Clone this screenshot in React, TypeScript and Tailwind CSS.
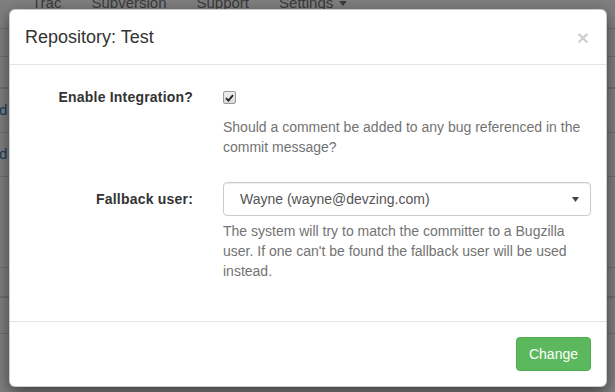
export default function App() {
  const rows = [
    { h: 'h-[28px]', b: 'border-b' },
    { h: 'h-[32px]', b: 'border-b-2' },
    { h: 'h-[44px]', b: 'border-b', d: true },
    { h: 'h-[44px]', b: 'border-b', d: true },
    { h: 'h-[91px]', b: 'border-b' },
    { h: 'h-[30px]', b: 'border-b-2' },
    { h: 'h-[36px]', b: 'border-b' },
    { h: 'h-[60px]', b: '' },
  ];

  return (
    <div className="relative w-[615px] h-[392px] overflow-hidden bg-white font-['Liberation_Sans',Arial,sans-serif] text-[14px] text-[#333]">
      {/* Page behind the dialog */}
      <div className="h-[29px] border-b border-[#ddd] overflow-hidden">
        <div className="flex pl-[17px] -mt-[7px] leading-[20px] text-[#777] text-[15px]">
          <span className="px-[15px]">Trac</span>
          <span className="px-[15px]">Subversion</span>
          <span className="px-[15px]">Support</span>
          <span className="px-[15px] flex items-center gap-[6px]">
            Settings
            <svg width="8" height="5" viewBox="0 0 8 5"><path d="M0 0h8L4 5z" fill="#777" /></svg>
          </span>
        </div>
      </div>
      {rows.map((r, i) => (
        <div key={i} className={`${r.h} ${r.b} border-[#ddd] flex items-center`}>
          {r.d && <span className="-ml-[1px] text-[#337ab7] text-[15px]">d</span>}
        </div>
      ))}

      {/* Backdrop + dialog */}
      <div className="absolute inset-0 bg-black/50 pt-[9px] pl-[9px]">
        <div className="w-[598px] bg-white rounded-[6px] border border-black/20 shadow-[0_5px_15px_rgba(0,0,0,0.5)]">
          {/* Header */}
          <div className="flex items-center justify-between px-[15px] py-[15px] border-b border-[#e5e5e5]">
            <h4 className="text-[18px] leading-[24px] text-[#333]">Repository: Test</h4>
            <span className="text-[21px] font-bold leading-none text-black/20 mr-[2px]">×</span>
          </div>

          {/* Body */}
          <div className="p-[15px]">
            <div className="flex mb-[15px]">
              <label className="w-[168px] pt-[7px] text-right font-bold leading-[20px] tracking-[0.2px]">Enable Integration?</label>
              <div className="ml-[30px] flex-1">
                <div className="pt-[7px] h-[27px] mb-[10px] leading-[20px]">
                  <span className="mt-[4px] flex items-center justify-center w-[13px] h-[13px] rounded-[2px] border border-[#9a9a9a] bg-gradient-to-b from-[#f0f0f0] to-[#d8d8d8]">
                    <svg width="9" height="8" viewBox="0 0 9 8">
                      <path d="M1 4.2 3.4 6.6 8 1.2" fill="none" stroke="#222" strokeWidth="1.8" />
                    </svg>
                  </span>
                </div>
                <p className="leading-[20px] text-[#737373] mb-[10px]">
                  Should a comment be added to any bug referenced in the commit message?
                </p>
              </div>
            </div>

            <div className="flex mb-[15px]">
              <label className="w-[168px] pt-[7px] text-right font-bold leading-[20px] tracking-[0.2px]">Fallback user:</label>
              <div className="ml-[30px] flex-1">
                <div className="h-[34px] flex items-center justify-between border border-[#ccc] rounded-[4px] pl-[16px] pr-[11px] text-[#555] shadow-[inset_0_1px_1px_rgba(0,0,0,0.075)]">
                  <span>Wayne (wayne@devzing.com)</span>
                  <svg width="7" height="5" viewBox="0 0 7 5"><path d="M0 0h7L3.5 5z" fill="#444" /></svg>
                </div>
                <p className="mt-[5px] mb-[10px] leading-[20px] text-[#737373]">
                  The system will try to match the committer to a Bugzilla user. If one can't be found the fallback user will be used instead.
                </p>
              </div>
            </div>
          </div>

          {/* Footer */}
          <div className="flex justify-end p-[15px] border-t border-[#e5e5e5]">
            <button className="h-[34px] px-[12px] rounded-[4px] bg-[#5cb85c] border border-[#4cae4c] text-white leading-[20px]">
              Change
            </button>
          </div>
        </div>
      </div>
    </div>
  );
}
